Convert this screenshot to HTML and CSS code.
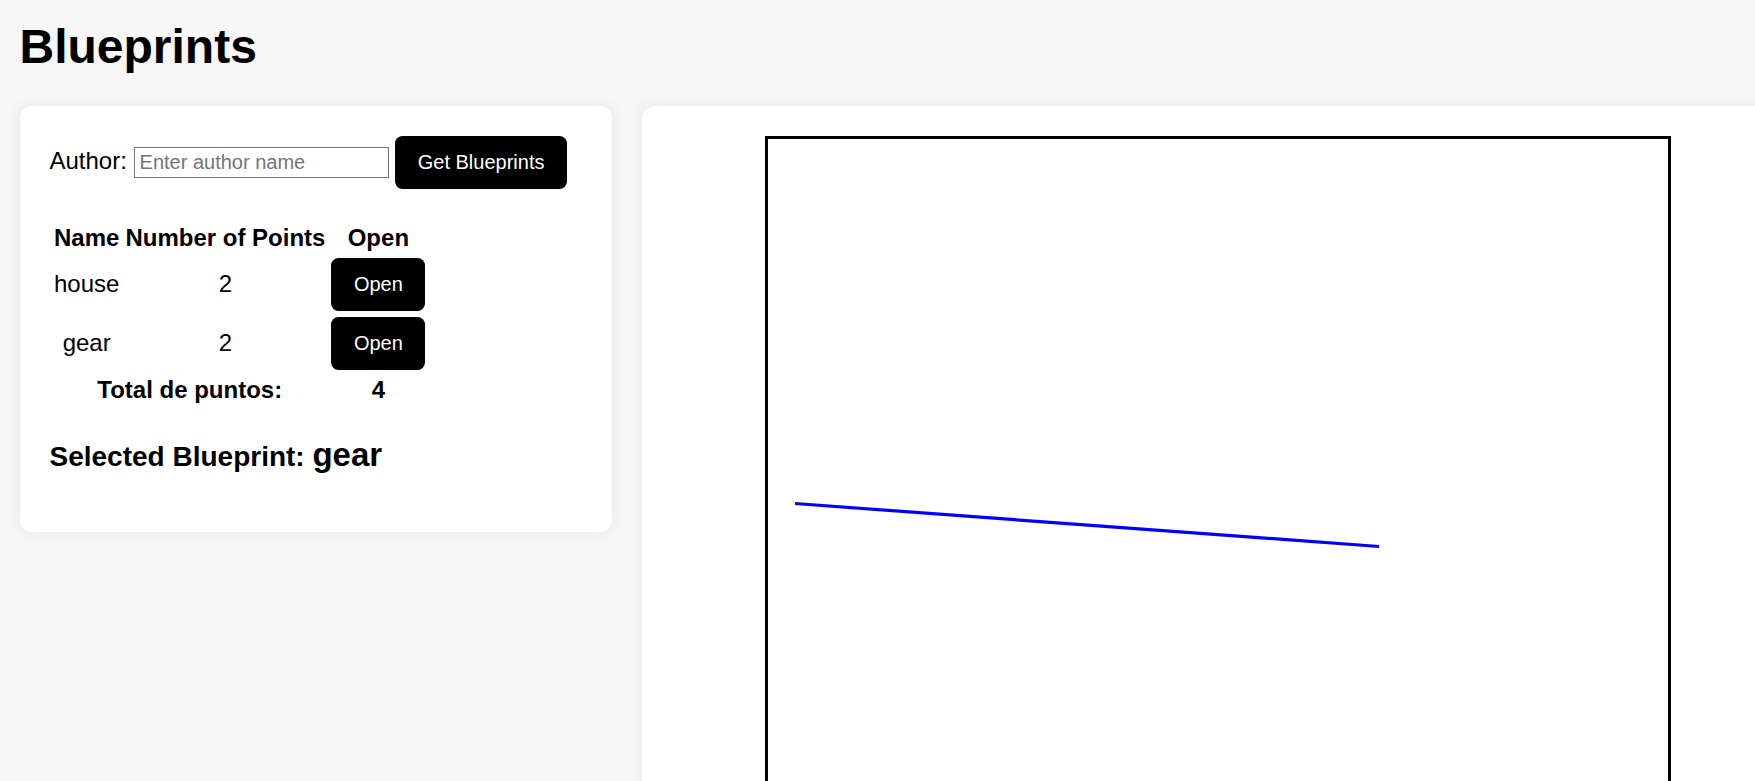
FILE: index.html
```html
<!DOCTYPE html>
<html lang="en">
<head>
<meta charset="utf-8">
<title>Blueprints</title>
<link rel="stylesheet" href="styles.css">
</head>
<body>
<div class="page">
  <h1 class="title">Blueprints</h1>
  <div class="layout">
    <section class="card card-left">
      <div class="author-row"><label class="author-label" for="author">Author:</label> <input id="author" class="author-input" type="text" placeholder="Enter author name"> <button class="btn">Get Blueprints</button></div>
      <table class="bp-table">
        <thead>
          <tr><th>Name</th><th>Number of Points</th><th>Open</th></tr>
        </thead>
        <tbody>
          <tr><td>house</td><td>2</td><td><button class="btn">Open</button></td></tr>
          <tr><td>gear</td><td>2</td><td><button class="btn">Open</button></td></tr>
        </tbody>
        <tfoot>
          <tr><td class="total" colspan="2">Total de puntos:</td><td class="total">4</td></tr>
        </tfoot>
      </table>
      <h3 class="selected">Selected Blueprint: <span class="selected-name">gear</span></h3>
    </section>
    <section class="card card-canvas">
      <div class="canvas-frame">
        <svg class="canvas-svg" width="900" height="900" viewBox="0 0 900 900" xmlns="http://www.w3.org/2000/svg">
          <line x1="27" y1="364.5" x2="611" y2="407.5" stroke="#0000ff" stroke-width="3.2"/>
        </svg>
      </div>
    </section>
  </div>
</div>
</body>
</html>
```

FILE: styles.css
```css
html, body {
  margin: 0;
  padding: 0;
  overflow: hidden;
  background: #f7f7f7;
}

body {
  font-family: "Liberation Sans", Arial, sans-serif;
  color: #000;
}

.page {
  padding: 19px 0 0 19.5px;
}

.title {
  margin: 0 0 32px 0;
  font-size: 48px;
  font-weight: bold;
  line-height: normal;
}

.layout {
  display: flex;
  align-items: flex-start;
  gap: 30px;
}

.card {
  background: #fff;
  border-radius: 12px;
  box-shadow: 0 0 15px rgba(0, 0, 0, 0.08);
  padding: 30px;
  box-sizing: border-box;
  flex-shrink: 0;
}

.card-left {
  width: 592.5px;
}

.author-row {
  font-size: 24px;
  line-height: normal;
  margin-bottom: 30px;
}

.author-input {
  font-family: "Liberation Sans", Arial, sans-serif;
  font-size: 20px;
  width: 255px;
  height: 31.5px;
  box-sizing: border-box;
  padding: 0 5px;
  border: 1px solid #767676;
  border-radius: 0;
  color: #000;
  background: #fff;
}

.author-input::placeholder {
  color: #757575;
}

.btn {
  font-family: "Liberation Sans", Arial, sans-serif;
  font-size: 20px;
  line-height: normal;
  padding: 15px 22.5px;
  border: 0;
  border-radius: 7.5px;
  background: #000;
  color: #fff;
  cursor: pointer;
}

.bp-table {
  border-collapse: separate;
  border-spacing: 3px;
  font-size: 24px;
}

.bp-table th,
.bp-table td {
  padding: 1.5px;
  text-align: center;
  vertical-align: middle;
  line-height: normal;
}

.bp-table th {
  font-weight: bold;
}

.bp-table .total {
  font-weight: bold;
}

.selected {
  font-size: 28px;
  font-weight: bold;
  margin: 28px 0;
  line-height: normal;
}

.selected-name {
  font-size: 33px;
}

.card-canvas {
  width: 1152px;
  display: flex;
  justify-content: center;
}

.canvas-frame {
  border: 3px solid #000;
  background: #fff;
  width: 900px;
  height: 900px;
  flex-shrink: 0;
}

.canvas-svg {
  display: block;
}
```
